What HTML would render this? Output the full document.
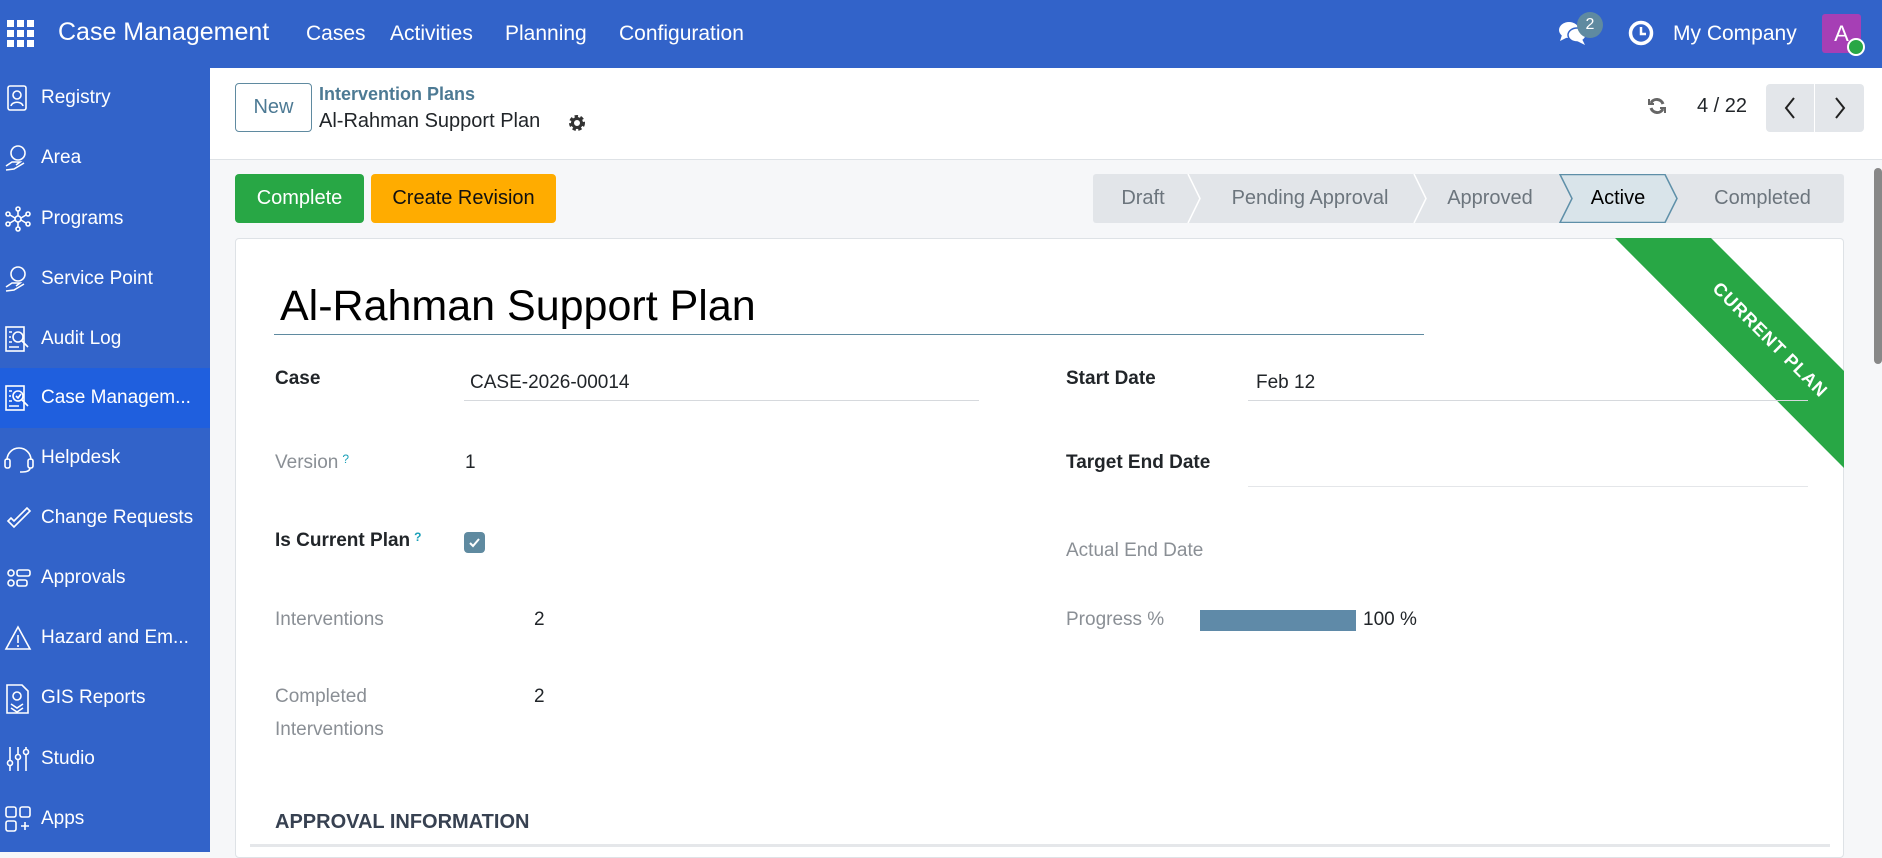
<!DOCTYPE html>
<html><head><meta charset="utf-8"><style>
*{box-sizing:border-box;margin:0;padding:0}
body{width:1882px;height:852px;overflow:hidden;font-family:"Liberation Sans",sans-serif;background:#f6f7f9;position:relative;color:#212529}
.a{position:absolute;white-space:nowrap}
#top{left:0;top:0;width:1882px;height:68px;background:#3263c9;color:#fff}
#side{left:0;top:68px;width:210px;height:784px;background:#3263c9;color:#fff}
.si{position:absolute;left:0;width:210px;height:60px;font-size:19px;line-height:60px;padding-left:41px}
.si svg{position:absolute;left:4px;top:16px}
.lbl{font-size:19px;color:#212529}
.mut{color:#8a8f95}
.q{color:#1aa0b8;font-size:12px;vertical-align:top;margin-left:4px}
.seg{position:absolute;top:174px;height:49px;line-height:49px;font-size:20px;color:#6c757d;text-align:center}
</style></head><body>
<div id="top" class="a">
 <svg class="a" style="left:7px;top:20px" width="27" height="27" viewBox="0 0 27 27" fill="#fff"><rect x="0" y="0" width="7" height="7"/><rect x="10" y="0" width="7" height="7"/><rect x="20" y="0" width="7" height="7"/><rect x="0" y="10" width="7" height="7"/><rect x="10" y="10" width="7" height="7"/><rect x="20" y="10" width="7" height="7"/><rect x="0" y="20" width="7" height="7"/><rect x="10" y="20" width="7" height="7"/><rect x="20" y="20" width="7" height="7"/></svg>
 <div class="a" style="left:58px;top:18px;font-size:25px">Case Management</div>
 <div class="a" style="left:306px;top:22px;font-size:21px">Cases</div>
 <div class="a" style="left:390px;top:22px;font-size:21px">Activities</div>
 <div class="a" style="left:505px;top:22px;font-size:21px">Planning</div>
 <div class="a" style="left:619px;top:22px;font-size:21px">Configuration</div>
 <svg class="a" style="left:1558px;top:20px" width="30" height="26" viewBox="0 0 30 26" fill="#fff"><ellipse cx="11" cy="10" rx="10" ry="8"/><path d="M4 15 L2 21 L10 17Z"/><ellipse cx="19" cy="15" rx="9" ry="7" stroke="#3263c9" stroke-width="1.5"/><path d="M24 19 L27 25 L19 21Z"/></svg>
 <div class="a" style="left:1577px;top:12px;width:26px;height:26px;border-radius:13px;background:#5f8aa0;font-size:16px;text-align:center;line-height:26px">2</div>
 <svg class="a" style="left:1628px;top:20px" width="26" height="26" viewBox="0 0 26 26"><circle cx="13" cy="13" r="10.5" fill="none" stroke="#fff" stroke-width="3.5"/><path d="M13 7 V14 H18" stroke="#fff" stroke-width="2.5" fill="none"/></svg>
 <div class="a" style="left:1673px;top:22px;font-size:21px">My Company</div>
 <div class="a" style="left:1822px;top:14px;width:39px;height:39px;background:#a63fb5;border-radius:3px;font-size:22px;text-align:center;line-height:39px">A</div>
 <div class="a" style="left:1847px;top:38px;width:18px;height:18px;border-radius:9px;background:#28a745;border:2px solid #fff"></div>
</div>
<div id="side" class="a">
 <div class="si" style="top:0">Registry<svg width="28" height="28" viewBox="0 0 28 28" fill="none" stroke="#fff" stroke-width="1.6"><rect x="4" y="2" width="18" height="24" rx="2"/><circle cx="13" cy="11" r="4"/><path d="M7 22c1-5 11-5 12 0"/></svg></div>
 <div class="si" style="top:60px">Area<svg width="28" height="28" viewBox="0 0 28 28" fill="none" stroke="#fff" stroke-width="1.6"><circle cx="14" cy="9" r="7"/><path d="M2 22l6-4h8l-4 3M2 26l8-1 10-6"/></svg></div>
 <div class="si" style="top:121px">Programs<svg width="28" height="28" viewBox="0 0 28 28" fill="none" stroke="#fff" stroke-width="1.6"><circle cx="14" cy="14" r="3"/><circle cx="14" cy="4" r="2"/><circle cx="14" cy="24" r="2"/><circle cx="4" cy="9" r="2"/><circle cx="24" cy="9" r="2"/><circle cx="4" cy="19" r="2"/><circle cx="24" cy="19" r="2"/><path d="M14 6v5M14 17v5M6 10l5 3M22 10l-5 3M6 18l5-3M22 18l-5-3"/></svg></div>
 <div class="si" style="top:181px">Service Point<svg width="28" height="28" viewBox="0 0 28 28" fill="none" stroke="#fff" stroke-width="1.6"><circle cx="14" cy="9" r="7"/><path d="M2 22l6-4h8l-4 3M2 26l8-1 10-6"/></svg></div>
 <div class="si" style="top:241px">Audit Log<svg width="28" height="28" viewBox="0 0 28 28" fill="none" stroke="#fff" stroke-width="1.6"><rect x="2" y="2" width="18" height="24"/><circle cx="14" cy="12" r="5"/><path d="M18 16l6 6M5 7h3M5 12h2M5 17h3M5 22h10"/></svg></div>
 <div class="si" style="top:300px;background:#1f5fde">Case Managem...<svg width="28" height="28" viewBox="0 0 28 28" fill="none" stroke="#fff" stroke-width="1.6"><rect x="2" y="2" width="18" height="24"/><circle cx="14" cy="12" r="5"/><path d="M18 16l6 6M5 7h3M5 12h2M5 17h3M5 22h10M12 12l2 2 3-4"/></svg></div>
 <div class="si" style="top:360px">Helpdesk<svg width="30" height="30" viewBox="0 0 30 30" fill="none" stroke="#fff" stroke-width="1.6"><path d="M3 16a12 12 0 0 1 24 0"/><rect x="1" y="15" width="5" height="9" rx="2"/><rect x="24" y="15" width="5" height="9" rx="2"/><path d="M26 24c0 4-6 4-10 4"/></svg></div>
 <div class="si" style="top:420px">Change Requests<svg width="28" height="28" viewBox="0 0 28 28" fill="none" stroke="#fff" stroke-width="1.6"><path d="M4 17l6 6 16-16-3-3-13 13-3-3z"/></svg></div>
 <div class="si" style="top:480px">Approvals<svg width="28" height="28" viewBox="0 0 28 28" fill="none" stroke="#fff" stroke-width="1.6"><circle cx="7" cy="9" r="3"/><circle cx="7" cy="19" r="3"/><rect x="13" y="6" width="13" height="6" rx="2"/><rect x="13" y="16" width="10" height="6" rx="2"/></svg></div>
 <div class="si" style="top:540px">Hazard and Em...<svg width="28" height="28" viewBox="0 0 28 28" fill="none" stroke="#fff" stroke-width="1.6"><path d="M14 3L2 25h24z M14 11v8M14 21v2"/></svg></div>
 <div class="si" style="top:600px">GIS Reports<svg width="28" height="30" viewBox="0 0 28 30" fill="none" stroke="#fff" stroke-width="1.6"><path d="M3 1h15l6 6v22H3z"/><circle cx="13" cy="12" r="4"/><path d="M7 20l6 4 6-4M7 24l6 4 6-4"/></svg></div>
 <div class="si" style="top:661px">Studio<svg width="28" height="28" viewBox="0 0 28 28" fill="none" stroke="#fff" stroke-width="1.6"><path d="M6 2v24M14 2v24M22 2v24"/><circle cx="6" cy="18" r="2.5" fill="#3263c9"/><circle cx="14" cy="12" r="2.5" fill="#3263c9"/><circle cx="22" cy="7" r="2.5" fill="#3263c9"/></svg></div>
 <div class="si" style="top:721px">Apps<svg width="28" height="28" viewBox="0 0 28 28" fill="none" stroke="#fff" stroke-width="1.6"><rect x="2" y="2" width="10" height="10" rx="2"/><rect x="16" y="2" width="10" height="10" rx="2"/><rect x="2" y="16" width="10" height="10" rx="2"/><path d="M21 17v8M17 21h8"/></svg></div>
</div>
<div class="a" style="left:210px;top:68px;width:1672px;height:92px;background:#fff;border-bottom:1px solid #dee2e6"></div>
<div class="a" style="left:235px;top:83px;width:77px;height:49px;border:1px solid #5f8aa0;border-radius:4px;color:#4d7a94;font-size:20px;text-align:center;line-height:47px">New</div>
<div class="a" style="left:319px;top:84px;font-size:18px;color:#4d7a94;font-weight:bold">Intervention Plans</div>
<div class="a" style="left:319px;top:110px;font-size:20px">Al-Rahman Support Plan</div>
<svg class="a" style="left:568px;top:114px" width="18" height="18" viewBox="0 0 18 18"><circle cx="9" cy="9" r="6" fill="none" stroke="#333" stroke-width="4" stroke-dasharray="3 2.2"/><circle cx="9" cy="9" r="4.5" fill="none" stroke="#333" stroke-width="3"/></svg>
<svg class="a" style="left:1647px;top:96px" width="20" height="20" viewBox="0 0 20 20" fill="none" stroke="#666" stroke-width="3"><path d="M16 8a6.5 6.5 0 0 0-12-1M4 12a6.5 6.5 0 0 0 12 1"/><path d="M2 3v5h5M18 17v-5h-5" stroke-width="2"/></svg>
<div class="a" style="left:1697px;top:95px;font-size:20px">4 / 22</div>
<div class="a" style="left:1766px;top:84px;width:98px;height:48px;background:#e3e6ea;border-radius:4px"></div>
<div class="a" style="left:1814px;top:84px;width:1px;height:48px;background:#fff"></div>
<svg class="a" style="left:1782px;top:96px" width="16" height="24" viewBox="0 0 16 24" fill="none" stroke="#222" stroke-width="2"><path d="M12 2L4 12l8 10"/></svg>
<svg class="a" style="left:1832px;top:96px" width="16" height="24" viewBox="0 0 16 24" fill="none" stroke="#222" stroke-width="2"><path d="M4 2l8 10-8 10"/></svg>
<div class="a" style="left:235px;top:174px;width:129px;height:49px;background:#28a745;border-radius:4px;color:#fff;font-size:20px;line-height:49px;text-align:center">Complete</div>
<div class="a" style="left:371px;top:174px;width:185px;height:49px;background:#ffac00;border-radius:4px;color:#111;font-size:20px;line-height:49px;text-align:center">Create Revision</div>
<div class="a" style="left:1093px;top:174px;width:751px;height:49px;background:#e2e5e9;border-radius:3px"></div>
<svg class="a" style="left:1093px;top:174px" width="751" height="49"><g fill="none" stroke="#fff" stroke-width="1.5"><path d="M95 0l12 24.5L95 49M321 0l12 24.5L321 49"/></g><path d="M467 0.5h105l12 24-12 24H467l12-24z" fill="#d9e4ea" stroke="#5e8fa8" stroke-width="1.5"/></svg>
<div class="seg" style="left:1093px;width:100px">Draft</div>
<div class="seg" style="left:1200px;width:220px">Pending Approval</div>
<div class="seg" style="left:1420px;width:140px">Approved</div>
<div class="seg" style="left:1568px;width:100px;color:#000">Active</div>
<div class="seg" style="left:1680px;width:165px">Completed</div>
<div class="a" style="left:235px;top:238px;width:1609px;height:620px;background:#fff;border:1px solid #dee2e6;border-radius:4px"></div>
<svg class="a" style="left:1600px;top:238px" width="244" height="240"><polygon points="15,0 111,0 244,133 244,230" fill="#28a745"/><text x="0" y="0" transform="translate(166,106) rotate(45)" fill="#fff" font-family="Liberation Sans" font-weight="bold" font-size="18" text-anchor="middle" letter-spacing="1">CURRENT PLAN</text></svg>
<div class="a" style="left:280px;top:282px;font-size:43px;color:#000">Al-Rahman Support Plan</div>
<div class="a" style="left:274px;top:334px;width:1150px;height:1px;background:#5f8aa0"></div>
<div class="a lbl" style="left:275px;top:368px;font-weight:bold">Case</div>
<div class="a lbl" style="left:470px;top:372px">CASE-2026-00014</div>
<div class="a" style="left:464px;top:400px;width:515px;height:1px;background:#d6d9dd"></div>
<div class="a lbl mut" style="left:275px;top:452px">Version<span class="q">?</span></div>
<div class="a lbl" style="left:465px;top:452px">1</div>
<div class="a lbl" style="left:275px;top:530px;font-weight:bold">Is Current Plan<span class="q">?</span></div>
<div class="a" style="left:464px;top:532px;width:21px;height:21px;background:#5f8aa0;border-radius:4px"></div>
<svg class="a" style="left:464px;top:532px" width="21" height="21"><path d="M6 11l3 3 6-7" stroke="#fff" stroke-width="2" fill="none"/></svg>
<div class="a lbl mut" style="left:275px;top:609px">Interventions</div>
<div class="a lbl" style="left:534px;top:609px">2</div>
<div class="a lbl mut" style="left:275px;top:686px">Completed</div>
<div class="a lbl mut" style="left:275px;top:719px">Interventions</div>
<div class="a lbl" style="left:534px;top:686px">2</div>
<div class="a" style="left:275px;top:811px;font-size:20px;font-weight:bold;color:#374151">APPROVAL INFORMATION</div>
<div class="a" style="left:250px;top:844px;width:1580px;height:3px;background:#e5e7ea"></div>
<div class="a lbl" style="left:1066px;top:368px;font-weight:bold">Start Date</div>
<div class="a lbl" style="left:1256px;top:372px">Feb 12</div>
<div class="a" style="left:1248px;top:400px;width:560px;height:1px;background:#d6d9dd"></div>
<div class="a lbl" style="left:1066px;top:452px;font-weight:bold">Target End Date</div>
<div class="a" style="left:1248px;top:486px;width:560px;height:1px;background:#e4e6e9"></div>
<div class="a lbl mut" style="left:1066px;top:540px">Actual End Date</div>
<div class="a lbl mut" style="left:1066px;top:609px">Progress %</div>
<div class="a" style="left:1200px;top:610px;width:156px;height:21px;background:#5f8aa8"></div>
<div class="a lbl" style="left:1363px;top:609px">100 %</div>
<div class="a" style="left:1874px;top:168px;width:8px;height:196px;background:#888;border-radius:4px"></div>
</body></html>
